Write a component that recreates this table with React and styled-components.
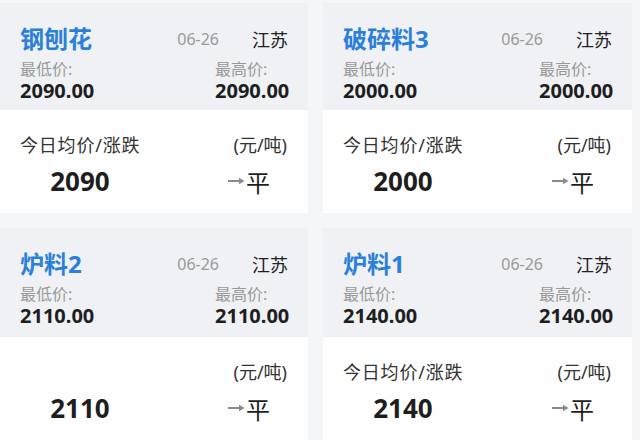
import React from "react";
import styled, { createGlobalStyle } from "styled-components";

const GlobalStyle = createGlobalStyle`
  html, body {
    margin: 0;
    padding: 0;
    background: #f5f6f8;
  }
  body {
    font-family: "Noto Sans", "Noto Sans CJK SC", sans-serif;
    color: #222;
  }
`;

const Grid = styled.div`
  display: grid;
  grid-template-columns: 308px 309px;
  grid-template-rows: 210px 1fr;
  column-gap: 15px;
  row-gap: 15px;
  padding: 3px 8px 0 0;
  width: 640px;
  height: 440px;
  box-sizing: border-box;
  overflow: hidden;
`;

const Card = styled.div`
  display: flex;
  flex-direction: column;
  background: #fefefe;
`;

const Header = styled.div`
  height: ${(p) => p.$h}px;
  flex-shrink: 0;
  box-sizing: border-box;
  background: #eff1f4;
  padding: 22px 20px 0 20px;
`;

const TitleRow = styled.div`
  display: flex;
  align-items: center;
  height: 28px;
`;

const Title = styled.div`
  flex: 1;
  font-size: 24px;
  line-height: 28px;
  font-weight: 700;
  color: #2a7fdb;
`;

const DateText = styled.div`
  font-size: 16px;
  color: #9a9a9a;
  margin-right: 33px;
`;

const Region = styled.div`
  font-size: 18px;
  color: #222;
`;

const PriceRow = styled.div`
  display: flex;
  justify-content: space-between;
  margin-top: 7px;
`;

const PriceBlock = styled.div`
  display: flex;
  flex-direction: column;
  width: 73px;
`;

const PriceLabel = styled.div`
  font-size: 16px;
  line-height: 18px;
  color: #999;
`;

const PriceValue = styled.div`
  margin-top: 2px;
  font-size: 20px;
  line-height: 22px;
  font-weight: 700;
  color: #1e1e1e;
  white-space: nowrap;
`;

const Body = styled.div`
  flex: 1;
  padding: 22px 21px 0 20px;
`;

const LineRow = styled.div`
  display: flex;
  justify-content: space-between;
  align-items: center;
  height: ${(p) => p.$h}px;
  margin-top: ${(p) => p.$gap || 0}px;
`;

const Label = styled.div`
  font-size: 18px;
  letter-spacing: 0.8px;
  color: #333;
`;

const Unit = styled.div`
  font-size: 18px;
  color: #333;
`;

const AvgValue = styled.div`
  width: 120px;
  text-align: center;
  font-size: 26px;
  font-weight: 700;
  color: #1e1e1e;
`;

const Change = styled.div`
  display: flex;
  align-items: center;
  gap: 1px;
  margin-right: 17px;
  font-size: 24px;
  color: #1e1e1e;
`;

function Arrow() {
  return (
    <svg width="17" height="8" viewBox="0 0 17 8">
      <line x1="0" y1="4" x2="12" y2="4" stroke="#8a8a8a" strokeWidth="2" />
      <polygon points="11,0.8 16.5,4 11,7.2" fill="#8a8a8a" />
    </svg>
  );
}

const items = [
  { name: "钢刨花", low: "2090.00", high: "2090.00", avg: "2090", label: true, h: 107 },
  { name: "破碎料3", low: "2000.00", high: "2000.00", avg: "2000", label: true, h: 107 },
  { name: "炉料2", low: "2110.00", high: "2110.00", avg: "2110", label: false, h: 109 },
  { name: "炉料1", low: "2140.00", high: "2140.00", avg: "2140", label: true, h: 109 },
];

function PriceCard({ item }) {
  return (
    <Card>
      <Header $h={item.h}>
        <TitleRow>
          <Title>{item.name}</Title>
          <DateText>06-26</DateText>
          <Region>江苏</Region>
        </TitleRow>
        <PriceRow>
          <PriceBlock>
            <PriceLabel>最低价:</PriceLabel>
            <PriceValue>{item.low}</PriceValue>
          </PriceBlock>
          <PriceBlock>
            <PriceLabel>最高价:</PriceLabel>
            <PriceValue>{item.high}</PriceValue>
          </PriceBlock>
        </PriceRow>
      </Header>
      <Body>
        <LineRow $h={24}>
          <Label>{item.label ? "今日均价/涨跌" : ""}</Label>
          <Unit>(元/吨)</Unit>
        </LineRow>
        <LineRow $h={32} $gap={9}>
          <AvgValue>{item.avg}</AvgValue>
          <Change>
            <Arrow />
            平
          </Change>
        </LineRow>
      </Body>
    </Card>
  );
}

export default function App() {
  return (
    <>
      <GlobalStyle />
      <Grid>
        {items.map((item) => (
          <PriceCard key={item.name} item={item} />
        ))}
      </Grid>
    </>
  );
}
